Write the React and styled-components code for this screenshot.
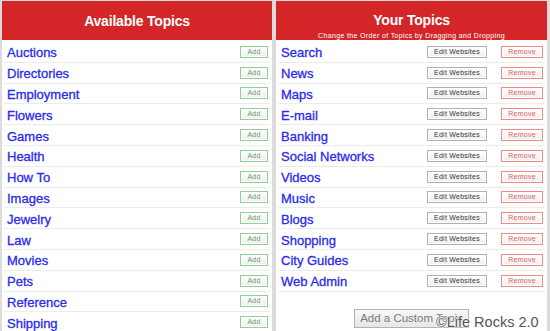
import styled, { createGlobalStyle } from "styled-components";

const GlobalStyle = createGlobalStyle`
  html, body {
    margin: 0;
    padding: 0;
    background: #ffffff;
    font-family: "Liberation Sans", Arial, sans-serif;
  }
`;

const available = [
  "Auctions",
  "Directories",
  "Employment",
  "Flowers",
  "Games",
  "Health",
  "How To",
  "Images",
  "Jewelry",
  "Law",
  "Movies",
  "Pets",
  "Reference",
  "Shipping",
];

const yours = [
  "Search",
  "News",
  "Maps",
  "E-mail",
  "Banking",
  "Social Networks",
  "Videos",
  "Music",
  "Blogs",
  "Shopping",
  "City Guides",
  "Web Admin",
];

const Frame = styled.div`
  position: relative;
  width: 550px;
  height: 331px;
  overflow: hidden;
  display: flex;
  gap: 4px;
  padding: 1px 3px 0 2px;
  box-sizing: border-box;
  background: #dcdcdc;
`;

const Panel = styled.div`
  flex: 0 0 ${(p) => p.$width}px;
  display: flex;
  flex-direction: column;
  background: #ffffff;
`;

const Header = styled.div`
  flex-shrink: 0;
  height: 39px;
  box-sizing: border-box;
  background: #d42528;
  color: #ffffff;
  display: flex;
  flex-direction: column;
  align-items: center;
  justify-content: ${(p) => (p.$sub ? "flex-start" : "center")};
  padding-top: ${(p) => (p.$sub ? "11px" : "0")};
  text-align: center;
`;

const Title = styled.div`
  font-size: 14px;
  font-weight: bold;
  letter-spacing: -0.2px;
  line-height: 16px;
`;

const Subtitle = styled.div`
  font-size: 7px;
  letter-spacing: 0.35px;
  line-height: 9px;
  margin-top: 3px;
`;

const List = styled.div`
  flex-shrink: 0;
  padding: 2px 2px 0;
  display: flex;
  flex-direction: column;
`;

const Row = styled.div`
  flex-shrink: 0;
  height: 20.8px;
  box-sizing: border-box;
  display: flex;
  align-items: center;
  gap: 14px;
  padding: 0 2px 0 3px;
  border-bottom: 1px solid #ececec;
`;

const Name = styled.span`
  flex: 1;
  color: #2a2aee;
  font-size: 13px;
  padding-top: 2px;
  -webkit-text-stroke: 0.3px #2a2aee;
`;

const SmallButton = styled.button`
  height: 12px;
  width: ${(p) => p.$width}px;
  padding: 0;
  font-family: "Liberation Sans", Arial, sans-serif;
  font-size: 7px;
  letter-spacing: 0.25px;
  line-height: 10px;
  border: 1px solid ${(p) => p.$border};
  color: ${(p) => p.$color};
  background: linear-gradient(#ffffff, #eeeeee);
  box-shadow: inset 0 0 0 1px #ffffff;
`;

const Footer = styled.div`
  display: flex;
  justify-content: center;
  padding-top: 17px;
`;

const CustomButton = styled.button`
  height: 19px;
  padding: 0 5px;
  font-family: "Liberation Sans", Arial, sans-serif;
  font-size: 11.5px;
  color: #7a7a7a;
  border: 1px solid #b4b4b4;
  background: linear-gradient(#f8f8f8, #e6e6e6);
`;

const Watermark = styled.div`
  position: absolute;
  left: 436px;
  top: 314px;
  font-family: "Liberation Sans", Arial, sans-serif;
  font-size: 14.5px;
  color: #555555;
  text-shadow: 0 0 2px #ffffff, 0 0 2px #ffffff, 0 0 1px #ffffff;
`;

export default function App() {
  return (
    <>
      <GlobalStyle />
      <Frame>
        <Panel $width={270}>
          <Header>
            <Title>Available Topics</Title>
          </Header>
          <List>
            {available.map((name) => (
              <Row key={name}>
                <Name>{name}</Name>
                <SmallButton $width={28} $border="#8fcf8f" $color="#6a9a6a">
                  Add
                </SmallButton>
              </Row>
            ))}
          </List>
        </Panel>
        <Panel $width={271}>
          <Header $sub>
            <Title>Your Topics</Title>
            <Subtitle>Change the Order of Topics by Dragging and Dropping</Subtitle>
          </Header>
          <List>
            {yours.map((name) => (
              <Row key={name}>
                <Name>{name}</Name>
                <SmallButton $width={60} $border="#b0b0b0" $color="#333333">
                  Edit Websites
                </SmallButton>
                <SmallButton $width={42} $border="#f28a8a" $color="#e06060">
                  Remove
                </SmallButton>
              </Row>
            ))}
          </List>
          <Footer>
            <CustomButton>Add a Custom Topic</CustomButton>
          </Footer>
        </Panel>
        <Watermark>©Life Rocks 2.0</Watermark>
      </Frame>
    </>
  );
}
